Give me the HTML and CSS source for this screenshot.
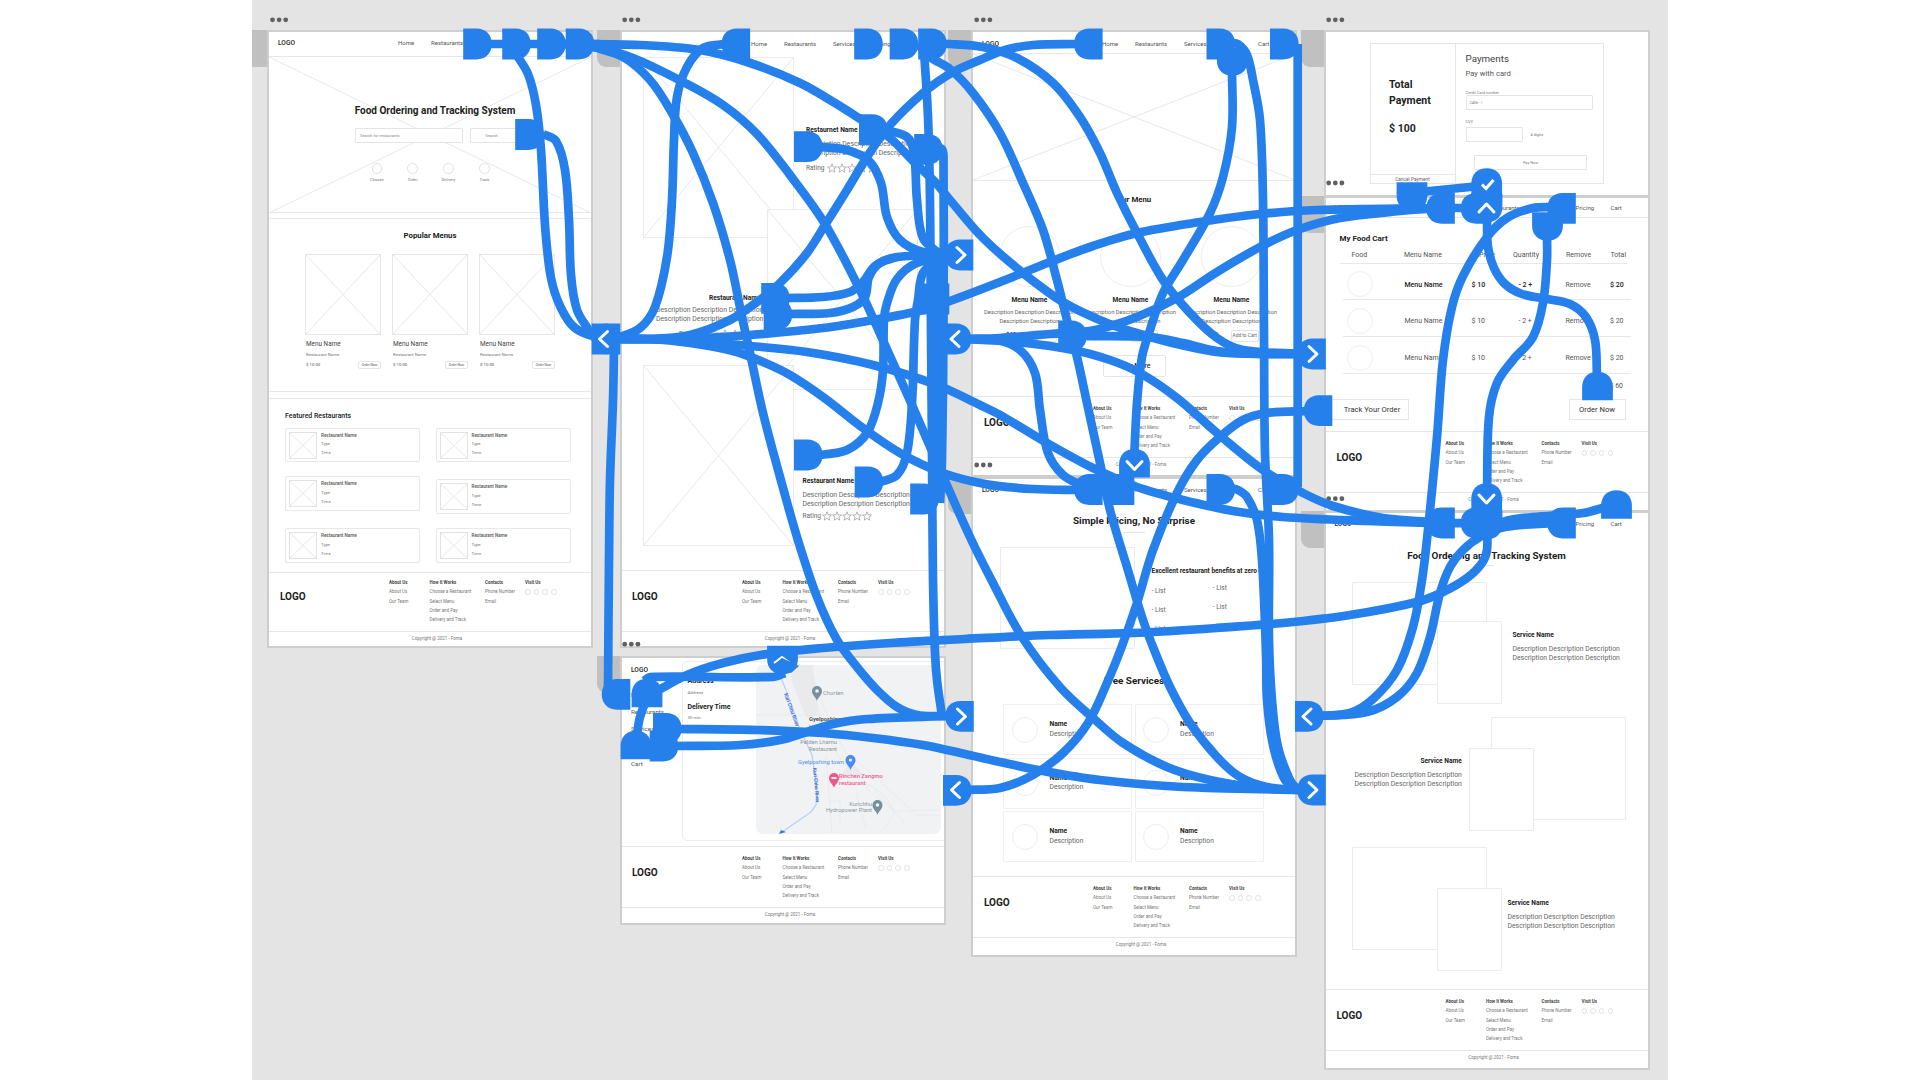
FILE: index.html
```html
<!DOCTYPE html>
<html lang="en">
<head>
<meta charset="utf-8">
<title>Food Ordering and Tracking System – Prototype</title>
<link rel="stylesheet" href="styles.css">
</head>
<body>
<svg class="defs" aria-hidden="true">
  <symbol id="cross" viewBox="0 0 100 100" preserveAspectRatio="none"><path class="cross-line" d="M0 0L100 100M100 0L0 100"/></symbol>
  <symbol id="stars" viewBox="0 0 50 10"><g class="star"><path id="star" d="M5 .8L6.2 3.9L9.4 4L6.9 6L7.8 9.2L5 7.4L2.2 9.2L3.1 6L.6 4L3.8 3.9Z"/><use href="#star" x="10"/><use href="#star" x="20"/><use href="#star" x="30"/><use href="#star" x="40"/></g></symbol>
</svg>
<main class="canvas">

  <i class="tab b-home"></i><i class="tab b-rest"></i><i class="tab b-track"></i><i class="tab b-menu"></i>
  <i class="tab b-price"></i><i class="tab b-pay"></i><i class="tab b-cart"></i><i class="tab b-serv"></i>

  <!-- Home -->
  <article class="board b-home">
    <nav class="nav ruled"><b>LOGO</b><span>Home</span><span>Restaurants</span><span>Services</span><span>Pricing</span><span>Cart</span></nav>
    <section class="hero">
      <svg class="x"><use href="#cross"/></svg>
      <h1>Food Ordering and Tracking System</h1>
      <div class="search"><span class="field">Search for restaurants</span><span class="button">Search</span></div>
      <div class="steps"><span>Choose</span><span>Order</span><span>Delivery</span><span>Track</span></div>
    </section>
    <section class="popular">
      <h2>Popular Menus</h2>
      <div class="menus">
        <div class="menu"><svg class="pic dark"><use href="#cross"/></svg><h3>Menu Name</h3><p>Restaurant Name</p><div class="buy"><span>$ 10.00</span><span class="pill">Order Now</span></div></div>
        <div class="menu"><svg class="pic"><use href="#cross"/></svg><h3>Menu Name</h3><p>Restaurant Name</p><div class="buy"><span>$ 10.00</span><span class="pill">Order Now</span></div></div>
        <div class="menu"><svg class="pic"><use href="#cross"/></svg><h3>Menu Name</h3><p>Restaurant Name</p><div class="buy"><span>$ 10.00</span><span class="pill">Order Now</span></div></div>
      </div>
    </section>
    <section class="featured">
      <h2>Featured Restaurants</h2>
      <div class="pair">
        <div class="stack left">
          <div class="rest"><svg><use href="#cross"/></svg><div><b>Restaurant Name</b><span>Type</span><span>Time</span></div></div>
          <div class="rest"><svg><use href="#cross"/></svg><div><b>Restaurant Name</b><span>Type</span><span>Time</span></div></div>
          <div class="rest"><svg><use href="#cross"/></svg><div><b>Restaurant Name</b><span>Type</span><span>Time</span></div></div>
        </div>
        <div class="stack right">
          <div class="rest"><svg><use href="#cross"/></svg><div><b>Restaurant Name</b><span>Type</span><span>Time</span></div></div>
          <div class="rest"><svg><use href="#cross"/></svg><div><b>Restaurant Name</b><span>Type</span><span>Time</span></div></div>
          <div class="rest"><svg><use href="#cross"/></svg><div><b>Restaurant Name</b><span>Type</span><span>Time</span></div></div>
        </div>
      </div>
    </section>
    <footer class="foot tight"><div class="cols"><strong>LOGO</strong><ul><li>About Us</li><li>About Us</li><li>Our Team</li></ul><ul><li>How It Works</li><li>Choose a Restaurant</li><li>Select Menu</li><li>Order and Pay</li><li>Delivery and Track</li></ul><ul><li>Contacts</li><li>Phone Number</li><li>Email</li></ul><ul><li>Visit Us</li><li class="social"><i></i><i></i><i></i><i></i></li></ul></div><p>Copyright @ 2021 - Foma</p></footer>
  </article>

  <!-- Restaurants -->
  <article class="board b-rest">
    <nav class="nav"><b>LOGO</b><span>Home</span><span>Restaurants</span><span>Services</span><span>Pricing</span><span>Cart</span></nav>
    <section class="stage">
      <svg class="photo p1"><use href="#cross"/></svg>
      <svg class="photo p2"><use href="#cross"/></svg>
      <svg class="photo p3"><use href="#cross"/></svg>
      <div class="blurb r1"><h3>Restaurnet Name</h3><p>Description Description Description</p><p>Description Description Description</p><div class="rating">Rating <svg><use href="#stars"/></svg></div></div>
      <div class="blurb r2"><h3>Restaurant Name</h3><p>Description Description Description</p><p>Description Description Description</p><div class="rating">Rating <svg><use href="#stars"/></svg></div></div>
      <div class="blurb r3"><h3>Restaurant Name</h3><p>Description Description Description</p><p>Description Description Description</p><div class="rating">Rating <svg><use href="#stars"/></svg></div></div>
    </section>
    <footer class="foot"><div class="cols"><strong>LOGO</strong><ul><li>About Us</li><li>About Us</li><li>Our Team</li></ul><ul><li>How It Works</li><li>Choose a Restaurant</li><li>Select Menu</li><li>Order and Pay</li><li>Delivery and Track</li></ul><ul><li>Contacts</li><li>Phone Number</li><li>Email</li></ul><ul><li>Visit Us</li><li class="social"><i></i><i></i><i></i><i></i></li></ul></div><p>Copyright @ 2021 - Foma</p></footer>
  </article>

  <!-- Tracking -->
  <article class="board b-track">
    <section class="tracking">
      <nav class="side"><b>LOGO</b><span>Home</span><span>Restaurants</span><span>Services</span><span>Pricing</span><span>Cart</span></nav>
      <div class="panel">
        <div class="info"><h3>Address</h3><p>Address</p><h3>Delivery Time</h3><p>30 min</p></div>
        <svg class="map" viewBox="0 0 185 169">
          <path fill="#e9eaec" d="M37 0H57L62 50L50 53L35 15ZM84 112L95 96L107 109Z"/>
          <g fill="none" stroke="#e6e8ea" stroke-width=".8"><path d="M53 0L61 38L68 68L85 95L100 112L118 130L140 146L184 145M70 90L76 168M72 136H84V160M0 50H60M100 128L110 164M118 124L150 160M105 112C112 125 128 120 138 148L128 165M57 12L75 60L90 88L120 112L160 150H184"/></g>
          <path fill="none" stroke="#b9d1f8" stroke-width="1.3" d="M25 13L30 25L44 64L56 90L61 125L60 140L55 147L26 167"/>
          <path fill="#3f78d1" d="M23 169L25 165L30 167Z"/>
          <g font-size="5.8" fill="#8b979e">
            <text x="67" y="29.5">Chorten</text>
            <text x="53" y="56" fill="#555" font-weight="700">Gyelposhing</text>
            <text x="53" y="64" fill="#555">Hotel</text>
            <text x="81" y="79" text-anchor="end">Pelden Lhamu</text><text x="81" y="85.5" text-anchor="end">Restaurant</text>
            <text x="42" y="99" fill="#4a8cf5">Gyelposhing town</text>
            <g fill="#f0588c" font-weight="500"><text x="83" y="113">Rinchen Zangmo</text><text x="83" y="119.5">restaurant</text></g>
            <text x="116" y="141" text-anchor="end">Kurichhu</text><text x="116" y="147" text-anchor="end">Hydropower Plant</text>
          </g>
          <g fill="#3570cc" font-size="5" font-weight="700"><text transform="translate(28 29) rotate(70)">Kuri Chhu River</text><text transform="translate(57 103) rotate(85)">Kuri Chhu River</text></g>
          <g><g fill="#78909c"><path id="mk" d="M61 36C60 32 56 30.500 56 26A5 5 0 0 1 66 26C66 30.500 62 32 61 36Z"/><use href="#mk" x="60.500" y="114"/></g><use href="#mk" x="33.500" y="69" fill="#4a8cf5"/><use href="#mk" x="17" y="87" fill="#f0588c"/></g>
          <g fill="#f1f2f4"><circle cx="61" cy="26" r="1.800"/><circle cx="94.500" cy="95" r="1.600"/><path d="M75.500 112H80.500V114H75.500Z"/><circle cx="121.500" cy="140" r="1.800"/></g>
        </svg>
      </div>
    </section>
    <footer class="foot"><div class="cols"><strong>LOGO</strong><ul><li>About Us</li><li>About Us</li><li>Our Team</li></ul><ul><li>How It Works</li><li>Choose a Restaurant</li><li>Select Menu</li><li>Order and Pay</li><li>Delivery and Track</li></ul><ul><li>Contacts</li><li>Phone Number</li><li>Email</li></ul><ul><li>Visit Us</li><li class="social"><i></i><i></i><i></i><i></i></li></ul></div><p>Copyright @ 2021 - Foma</p></footer>
  </article>

  <!-- Menu -->
  <article class="board b-menu">
    <nav class="nav"><b>LOGO</b><span>Home</span><span>Restaurants</span><span>Services</span><span>Pricing</span><span>Cart</span></nav>
    <svg class="banner"><use href="#cross"/></svg>
    <section class="dishes">
      <h2>Our Menu</h2>
      <div class="plates">
        <div class="plate"><i></i><h3>Menu Name</h3><p>Description Description Description</p><p>Description Description</p><div class="add"><b>$ 10</b><span class="pill">Add to Cart</span></div></div>
        <div class="plate"><i></i><h3>Menu Name</h3><p>Description Description Description</p><p>Description Description</p><div class="add"><b>$ 10</b><span class="pill">Add to Cart</span></div></div>
        <div class="plate"><i></i><h3>Menu Name</h3><p>Description Description Description</p><p>Description Description</p><div class="add"><b>$ 10</b><span class="pill">Add to Cart</span></div></div>
      </div>
      <span class="more">View More</span>
    </section>
    <footer class="foot"><div class="cols"><strong>LOGO</strong><ul><li>About Us</li><li>About Us</li><li>Our Team</li></ul><ul><li>How It Works</li><li>Choose a Restaurant</li><li>Select Menu</li><li>Order and Pay</li><li>Delivery and Track</li></ul><ul><li>Contacts</li><li>Phone Number</li><li>Email</li></ul><ul><li>Visit Us</li><li class="social"><i></i><i></i><i></i><i></i></li></ul></div><p>Copyright @ 2021 - Foma</p></footer>
  </article>

  <!-- Pricing -->
  <article class="board b-price">
    <nav class="nav"><b>LOGO</b><span>Home</span><span>Restaurants</span><span>Services</span><span>Pricing</span><span>Cart</span></nav>
    <h1 class="headline">Simple Pricing, No Surprise</h1>
    <section class="offer">
      <div class="frame"></div>
      <div class="benefits">
        <h3>Excellent restaurant benefits at zero cost</h3>
        <div class="lists"><ul><li>- List</li><li>- List</li><li>- List</li></ul><ul><li>- List</li><li>- List</li><li>- List</li></ul></div>
      </div>
    </section>
    <h1 class="free">Free Services</h1>
    <section class="cards">
      <div class="card"><i></i><div><b>Name</b><span>Description</span></div></div><div class="card"><i></i><div><b>Name</b><span>Description</span></div></div>
      <div class="card"><i></i><div><b>Name</b><span>Description</span></div></div><div class="card"><i></i><div><b>Name</b><span>Description</span></div></div>
      <div class="card"><i></i><div><b>Name</b><span>Description</span></div></div><div class="card"><i></i><div><b>Name</b><span>Description</span></div></div>
    </section>
    <footer class="foot"><div class="cols"><strong>LOGO</strong><ul><li>About Us</li><li>About Us</li><li>Our Team</li></ul><ul><li>How It Works</li><li>Choose a Restaurant</li><li>Select Menu</li><li>Order and Pay</li><li>Delivery and Track</li></ul><ul><li>Contacts</li><li>Phone Number</li><li>Email</li></ul><ul><li>Visit Us</li><li class="social"><i></i><i></i><i></i><i></i></li></ul></div><p>Copyright @ 2021 - Foma</p></footer>
  </article>

  <!-- Payment -->
  <article class="board b-pay">
    <section class="checkout">
      <div class="total"><div class="sum"><h1>Total<br>Payment</h1><h1>$ 100</h1></div><p>Cancel Payment</p></div>
      <div class="form">
        <h2>Payments</h2><h3>Pay with card</h3>
        <label>Credit Card number</label><span class="input">2456 - |</span>
        <label class="cvv">CVV</label><div class="row"><span class="input"></span><span>4 digits</span></div>
        <span class="pay">Pay Now</span>
      </div>
    </section>
  </article>

  <!-- Cart -->
  <article class="board b-cart">
    <nav class="nav ruled"><b>LOGO</b><span>Home</span><span>Restaurants</span><span>Services</span><span>Pricing</span><span>Cart</span></nav>
    <section class="cart">
      <h2>My Food Cart</h2>
      <div class="line head"><span>Food</span><span>Menu Name</span><span>Price</span><span>Quantity</span><span>Remove</span><span>Total</span></div>
      <div class="line first"><i></i><span>Menu Name</span><span>$ 10</span><span>- 2 +</span><span>Remove</span><span>$ 20</span></div>
      <div class="line"><i></i><span>Menu Name</span><span>$ 10</span><span>- 2 +</span><span>Remove</span><span>$ 20</span></div>
      <div class="line"><i></i><span>Menu Name</span><span>$ 10</span><span>- 2 +</span><span>Remove</span><span>$ 20</span></div>
      <p class="grand">$ 60</p>
      <div class="actions"><span class="track">Track Your Order</span><span>Order Now</span></div>
    </section>
    <footer class="foot"><div class="cols"><strong>LOGO</strong><ul><li>About Us</li><li>About Us</li><li>Our Team</li></ul><ul><li>How It Works</li><li>Choose a Restaurant</li><li>Select Menu</li><li>Order and Pay</li><li>Delivery and Track</li></ul><ul><li>Contacts</li><li>Phone Number</li><li>Email</li></ul><ul><li>Visit Us</li><li class="social"><i></i><i></i><i></i><i></i></li></ul></div><p>Copyright @ 2021 - Foma</p></footer>
  </article>

  <!-- Services -->
  <article class="board b-serv">
    <nav class="nav"><b>LOGO</b><span>Home</span><span>Restaurants</span><span>Services</span><span>Pricing</span><span>Cart</span></nav>
    <h1 class="headline">Food Ordering and Tracking System</h1>
    <section class="stage">
      <div class="big g1"></div><div class="small s1"></div>
      <div class="blurb d1"><h3>Service Name</h3><p>Description Description Description</p><p>Description Description Description</p></div>
      <div class="big g2"></div><div class="small s2"></div>
      <div class="blurb d2"><h3>Service Name</h3><p>Description Description Description</p><p>Description Description Description</p></div>
      <div class="big g3"></div><div class="small s3"></div>
      <div class="blurb d3"><h3>Service Name</h3><p>Description Description Description</p><p>Description Description Description</p></div>
    </section>
    <footer class="foot"><div class="cols"><strong>LOGO</strong><ul><li>About Us</li><li>About Us</li><li>Our Team</li></ul><ul><li>How It Works</li><li>Choose a Restaurant</li><li>Select Menu</li><li>Order and Pay</li><li>Delivery and Track</li></ul><ul><li>Contacts</li><li>Phone Number</li><li>Email</li></ul><ul><li>Visit Us</li><li class="social"><i></i><i></i><i></i><i></i></li></ul></div><p>Copyright @ 2021 - Foma</p></footer>
  </article>

  <svg class="wires" viewBox="252 0 1416 1080" width="1416" height="1080">
    <defs>
      <g id="dots" fill="#606060"><circle r="2.400"/><circle cx="6.600" r="2.400"/><circle cx="13.200" r="2.400"/></g>
      <path id="pin" d="M-14.300 -15.400H-1C8.500 -15.400 14.300 -9 14.300 0S8.500 15.400 -1 15.400H-14.300Z"/>
      <path id="chev" d="M-4 -7.500L4 0L-4 7.500" fill="none" stroke="#fff" stroke-width="3" stroke-linecap="round" stroke-linejoin="round"/>
    </defs>
    <use href="#dots" x="272.500" y="19.800"/><use href="#dots" x="624.700" y="19.800"/><use href="#dots" x="976.700" y="19.800"/><use href="#dots" x="1328.700" y="19.800"/>
    <use href="#dots" x="624.700" y="644.200"/><use href="#dots" x="976.700" y="465"/><use href="#dots" x="1328.700" y="183"/><use href="#dots" x="1328.700" y="498.700"/>
    <g id="paths" fill="none" stroke="#2680eb" stroke-width="8.700" stroke-linecap="butt" stroke-linejoin="round"></g>
    <g id="pins" fill="#2680eb"></g>
  </svg>
</main>
<script src="connectors.js"></script>
</body>
</html>
```
FILE: styles.css
```css
* { box-sizing: border-box; margin: 0; padding: 0; }
body { background: #fff; font-family: Roboto, "Liberation Sans", sans-serif; color: #333; overflow: hidden; }
.defs { position: absolute; width: 0; height: 0; }
.canvas { position: relative; width: 1416px; height: 1080px; margin-left: 252px; background: #e4e4e4; overflow: hidden; }
.wires { position: absolute; inset: 0; }
h1, h2, h3, b, strong { color: #222; font-weight: 700; }
h1, h2, h3, p, span, li, b { white-space: nowrap; }
ul { list-style: none; }
i { display: block; }
svg { display: block; }
.cross-line { fill: none; stroke: #e8e8e8; stroke-width: 1; vector-effect: non-scaling-stroke; }
.dark .cross-line { stroke: #c4c4c4; }
.star path, .star { fill: none; stroke: #888; stroke-width: .6; }

/* boards are placed on the free canvas */
.board { position: absolute; left: var(--x); top: var(--y); width: 322px; height: var(--h); background: #fff; display: flex; flex-direction: column; box-shadow: 0 0 0 2px #cecece; overflow: hidden; }
.tab { position: absolute; left: calc(var(--x) - 25px); top: calc(var(--y) - 2px); width: 23px; height: 37px; background: #c0c0c0; border-bottom-left-radius: 9px; }
.b-home { --x: 17px; --y: 32px; --h: 614px; }
.b-rest { --x: 370px; --y: 32px; --h: 614px; }
.b-track { --x: 370px; --y: 658px; --h: 265px; }
.b-menu { --x: 721px; --y: 32px; --h: 443px; }
.b-price { --x: 721px; --y: 479px; --h: 476px; }
.b-pay { --x: 1073.500px; --y: 32px; --h: 163px; }
.b-cart { --x: 1073.500px; --y: 198px; --h: 312px; }
.b-serv { --x: 1073.500px; --y: 513px; --h: 555px; }

.nav { flex: none; height: 25px; padding: 0 0 2px 9px; display: grid; grid-template-columns: 120px 33px 49px 39px 35px auto; align-items: center; font-size: 6px; line-height: 8px; color: #555; }
.nav b { font-size: 6.600px; font-weight: 500; }
.ruled { border-bottom: 1px solid #e8e8e8; }

.foot { flex: none; margin-top: auto; height: 79px; border-top: 1px solid #e6e6e6; font-size: 4.500px; line-height: 9.300px; color: #777; }
.foot .cols { height: 60px; padding: 7px 0 0 11px; display: grid; grid-template-columns: 109px 40.500px 55.500px 40px auto; }
.foot strong { font-size: 10px; line-height: 38px; }
.foot li:first-child { font-weight: 700; color: #444; }
.foot > p { border-top: 1px solid #e6e6e6; line-height: 13px; text-align: center; padding-left: 14px; }
.social { display: flex; gap: 3.200px; padding-top: 2px; }
.social i { width: 5.500px; height: 5.500px; border: 1px solid #e2e2e2; border-radius: 50%; }
.tight { height: 74px; }
.tight .cols { height: 58px; padding-top: 5px; }
.b-rest .foot strong, .b-track .foot strong { margin-left: -1px; }

/* home */
.hero { display: grid; height: 156px; grid-template-rows: 71px 38px 1fr; border-bottom: 1px solid #e8e8e8; }
.hero .x { grid-area: 1 / 1 / 4 / 2; width: 322px; height: 156px; }
.hero h1 { grid-area: 1 / 1; font-size: 10px; line-height: 16px; padding: 45.500px 0 0 10px; text-align: center; }
.search { grid-area: 2 / 1; display: flex; gap: 6.500px; padding-left: 86px; font-size: 4px; line-height: 13px; color: #888; }
.search > * { height: 15px; border: 1px solid #e4e4e4; border-radius: 1px; background: #fff; }
.field { width: 108px; padding-left: 4px; }
.button { width: 54px; padding-left: 15px; }
.steps { grid-area: 3 / 1; display: flex; padding-left: 90px; margin-top: -3px; font-size: 4px; line-height: 6px; text-align: center; color: #777; }
.steps span { width: 35.800px; }
.steps span::before { content: ""; display: block; width: 8.500px; height: 8.500px; margin: 0 auto 3px; border: 1px solid #e0e0e0; border-radius: 50%; background: #fff; }
.popular { margin-top: 5px; height: 174px; border: solid #e8e8e8; border-width: 1px 0; }
.popular h2 { font-size: 7.800px; line-height: 10px; margin: 12px 0 0; text-align: center; }
.menus { display: flex; gap: 11px; padding: 13px 0 0 36px; }
.menu { width: 76px; font-size: 4.300px; color: #777; }
.pic { width: 76px; height: 81px; border: 1px solid #e6e6e6; }
.menu h3 { font-size: 6.400px; font-weight: 400; color: #444; line-height: 9px; margin: 5px 0 0 1px; }
.menu p { line-height: 7px; margin: 2px 0 0 1px; }
.buy { display: flex; justify-content: space-between; align-items: center; margin: 2.500px 0 0 1px; line-height: 7px; color: #555; }
.pill { border: 1px solid #e4e4e4; border-radius: 2px; background: #fff; }
.buy .pill { width: 23px; font-size: 3.300px; text-align: center; line-height: 6.500px; }
.featured { margin-top: 6px; border-top: 1px solid #e8e8e8; padding: 11.500px 0 0 16px; }
.featured h2 { font-size: 6.900px; font-weight: 500; line-height: 10px; }
.pair { display: flex; gap: 15.500px; margin-top: 7px; }
.rest { width: 135px; height: 34.500px; border: 1px solid #e8e8e8; border-radius: 2px; display: flex; gap: 4px; padding: 3px; font-size: 4.300px; line-height: 8.800px; color: #777; }
.rest b { font-weight: 500; color: #555; font-size: 4.600px; }
.rest svg { width: 28px; height: 27px; border: 1px solid #e2e2e2; }
.rest div { display: grid; align-content: center; }
.stack { display: grid; }
.left { grid-template-rows: 48.500px 52px 35px; }
.right { grid-template-rows: 51.500px 49px 35px; }

/* overlapping wireframe pieces share one grid cell */
.stage { display: grid; grid-template: 1fr / 1fr; justify-items: start; align-items: start; flex: 1; min-height: 0; }
.stage > * { grid-area: 1 / 1; }
.photo { width: 151px; height: 181px; border: 1px solid #ebebeb; background: #fff; }
.p1 { margin: 0 0 0 21px; }
.p2 { margin: 152px 0 0 145px; }
.p3 { margin: 308px 0 0 21px; }
.blurb { font-size: 6.850px; line-height: 9.200px; color: #666; }
.blurb h3 { font-size: 6.600px; line-height: 10px; margin-bottom: 5px; }
.rating { display: flex; align-items: center; margin-top: 5px; gap: 2px; font-size: 6.500px; }
.rating svg { width: 50px; height: 10px; }
.r1 { margin: 68px 0 0 184px; }
.r2 { margin: 236px 0 0 34px; }
.r2 h3 { padding-left: 53px; margin-bottom: 3px; }
.r2 .rating { padding-left: 23px; }
.r3 { margin: 419px 0 0 180.500px; }
.r3 .rating { margin-top: 2px; gap: 1px; }
.b-rest .foot { height: 76px; }

/* tracking */
.tracking { flex: 1; display: flex; gap: 19.500px; padding: 3px 0 5px 9px; }
.side { width: 31px; display: grid; grid-auto-rows: 17.200px; align-items: center; padding-top: 1px; align-content: start; font-size: 6.200px; color: #555; line-height: 8px; }
.side b { font-weight: 500; font-size: 6.600px; margin-top: -1px; }
.side span { margin-top: 14px; }
.panel { flex: none; width: 270px; height: 180px; border: 1px solid #ececec; border-radius: 6px; display: flex; padding: 3px 0 0 5px; }
.info { width: 68.500px; font-size: 4.300px; line-height: 8px; color: #777; padding-top: 12px; }
.info h3 { font-size: 7px; line-height: 9px; margin-bottom: 2.500px; }
.info p { margin-bottom: 6px; }
.map { width: 185px; height: 169px; background: #f1f2f4; border-radius: 7px; }

/* menu */
.b-menu .nav { height: 21px; padding: 2px 0 0 9px; }
.banner { flex: none; width: 322px; height: 128px; border: solid #e8e8e8; border-width: 1px 0; }
.dishes { text-align: center; }
.dishes h2 { font-size: 7.800px; line-height: 10px; margin-top: 14px; }
.plates { display: grid; grid-template-columns: 102px 100px 102px; justify-content: start; padding-left: 5.500px; margin-top: 20.500px; font-size: 5.800px; line-height: 8.800px; color: #666; }
.plate { display: flex; flex-direction: column; align-items: center; }
.plate > i { width: 61px; height: 61px; border: 1px solid #eee; border-radius: 50%; }
.plate h3 { font-size: 6.600px; line-height: 10px; margin: 8px 0 3.500px; }
.add { display: flex; gap: 13px; margin-top: 4px; font-size: 4.800px; padding-left: 4px; line-height: 10px; }
.add .pill { width: 28px; height: 12px; }
.more { display: block; width: 63px; height: 22px; margin: 13px auto 0; border: 1px solid #e4e4e4; border-radius: 2px; font-size: 7px; font-weight: 500; line-height: 20px; }

/* pricing */
.headline { font-size: 9.900px; line-height: 14px; text-align: center; margin-top: 10px; }
.headline::after { content: ""; display: block; width: 21px; height: 1px; margin: 4px auto 0; background: #e2e2e2; }
.b-price .nav, .b-serv .nav { padding-bottom: 3px; }
.offer { display: flex; gap: 17px; padding: 14px 0 0 26.500px; }
.frame { width: 135px; height: 102px; border: 1px solid #ebebeb; border-radius: 1px; }
.benefits { padding-top: 18.500px; font-size: 6.600px; color: #666; }
.benefits h3 { font-size: 6.500px; line-height: 10px; }
.lists { display: flex; gap: 47px; height: 55px; line-height: 19px; padding-top: 6.500px; }
.lists ul + ul { margin-top: -3px; }
.free { font-size: 9.900px; line-height: 14px; text-align: center; margin: 25px 0 16px; }
.cards { display: grid; grid-template-columns: 129px 129px; gap: 2.500px 3px; padding-left: 29.500px; }
.card { height: 51px; border: 1.500px solid #f0f0f0; display: flex; align-items: center; gap: 12px; padding-left: 8px; font-size: 6.700px; line-height: 9.500px; color: #666; }
.card:nth-child(even) { padding-left: 7px; gap: 11.500px; }
.card i { width: 26px; height: 26px; border: 1.500px solid #eee; border-radius: 50%; }
.card b, .card span { display: block; }

/* payment */
.checkout { display: grid; grid-template-columns: 85px 149px; margin: 11px 0 0 44px; width: 234px; height: 141px; border: 1px solid #e6e6e6; }
.total { border-right: 1px solid #e6e6e6; }
.sum { height: 130px; padding: 33px 0 0 18.500px; }
.sum h1 { font-size: 10.500px; line-height: 16.300px; margin-bottom: 11.500px; }
.total p { border-top: 1px solid #e6e6e6; font-size: 4.800px; line-height: 10px; text-align: center; color: #666; }
.form { padding: 8px 0 0 10px; display: flex; flex-direction: column; font-size: 3.900px; color: #777; }
.form h2 { font-size: 9.800px; line-height: 13px; font-weight: 400; color: #444; }
.form h3 { font-size: 7.600px; line-height: 10px; margin-top: 4px; font-weight: 400; color: #555; }
.form label { line-height: 5px; margin-top: 10.500px; }
.form .cvv { margin-top: 9px; }
.input { height: 15px; width: 127px; border: 1px solid #e4e4e4; border-radius: 1px; padding-left: 3px; line-height: 14px; }
.row { display: flex; gap: 8px; margin-top: 3px; align-items: center; }
.row .input { width: 57px; }
.pay { width: 113px; height: 15px; margin: 13px 0 0 8.500px; border: 1px solid #e4e4e4; border-radius: 1px; text-align: center; line-height: 14px; }

/* cart */
.b-cart .nav { height: 20px; padding-bottom: 0; }
.cart { padding-left: 14px; }
.cart h2 { font-size: 8px; line-height: 10px; margin-top: 15.500px; }
.line { width: 288px; margin-left: 3px; height: 36.800px; padding-top: 6.500px; display: grid; grid-template-columns: 62px 67px 47px 47px 44.500px auto; align-items: center; border-bottom: 1px solid #e8e8e8; font-size: 7px; color: #555; }
.line i { width: 26px; height: 26px; border: 1px solid #f0f0f0; border-radius: 50%; margin: -1px 0 0 4px; }
.head { height: 20px; margin-left: 0; padding: 4px 0 0 12px; grid-template-columns: 52.500px 75px 34px 53px 44.500px auto; }
.first { color: #222; font-weight: 500; }
.first span:nth-child(5) { color: #555; font-weight: 400; }
.grand { font-size: 7px; line-height: 10px; padding: 7px 0 0 270px; color: #555; }
.actions { display: flex; justify-content: space-between; width: 300px; margin: 8px 0 0 -14px; font-size: 7.600px; line-height: 19px; color: #333; }
.actions span { width: 57px; height: 21px; border: 1px solid #e6e6e6; text-align: center; }
.actions .track { width: 83px; padding-left: 10px; }

/* services */
.b-serv .headline { margin-top: 11px; }
.b-serv .headline::after { width: 14px; margin-top: 2px; }
.big, .small { border: 1px solid #ebebeb; background: #fff; border-radius: 1px; }
.big { width: 135px; height: 103px; }
.small { width: 65px; height: 83px; }
.g1 { margin: 15.500px 0 0 26.500px; }
.s1 { margin: 54.500px 0 0 111.500px; }
.d1 { margin: 63.500px 0 0 187px; }
.g2 { margin: 151px 0 0 165.500px; }
.s2 { margin: 181.500px 0 0 143.500px; }
.d2 { margin: 189.500px 0 0 29px; }
.d2 h3 { padding-left: 66px; }
.g3 { margin: 281px 0 0 26.500px; }
.s3 { margin: 322px 0 0 111.500px; }
.d3 { margin: 332px 0 0 182px; }
```
FILE: connectors.js
```js
// Each wire is a list of x,y stops; a smooth curve is run through them.
const wires = [
  "490,44 600,44",
  "516,54 528,74 536,105 541,150 545,225 551,278 561,308 575,328 600,339",
  "543,134 556,141 565,170 569,220 571,275 577,310 590,332",
  "614,348 613,400 610,480 609,560 608,690",
  "565,44 640,45 700,50 750,63 800,83 835,103 865,122 890,138 915,163 935,182 950,200 983,238 1023,273 1063,302 1107,323 1150,337 1190,347 1227,353 1305,354",
  "565,44 594,47 633,58 685,83 723,105 757,134 790,175 825,224 860,290 885,345 912,405 938,465 970,537 993,583 1022,637 1060,687 1093,718 1123,743 1167,767 1210,780 1260,788 1300,790",
  "590,46 623,57 650,80 672,113 693,153 713,203 730,260 742,317 750,353 763,413 780,477 797,537 817,597 837,640 857,667 877,690 897,707 917,715 945,716",
  "930,44 950,44 983,47 1017,58 1053,83 1080,117 1100,153 1117,193 1137,233 1163,280 1190,313 1217,338 1243,350 1305,354",
  "918,44 930,57 950,69 973,93 1000,133 1023,183 1043,230 1057,280 1067,320 1077,357 1087,403 1100,463 1110,510 1127,567 1143,620 1155,652 1170,687 1190,723 1217,757 1240,777 1267,787 1300,790",
  "725,44 703,48 687,67 677,97 674,140 672,200 667,257 655,307 640,328 615,339",
  "610,339 650,339 690,335 730,320 757,302 780,283 807,253 825,225 847,190 867,157 890,125 923,93 953,72 980,60 1005,50 1033,45 1078,44",
  "610,339 680,339 750,335 823,328 873,320 923,310 950,301 1000,282 1050,262 1093,246 1137,233 1200,222 1260,214 1317,210 1440,208",
  "610,339 650,339 690,341 750,346 807,352 873,365 937,385 980,405 1000,415 1047,443 1093,468 1137,487 1183,500 1233,511 1283,517 1367,521 1433,523 1500,523",
  "610,339 650,339 690,343 733,351 763,362 790,375 823,397 863,428 900,453 940,472 985,484 1033,489 1080,490",
  "965,339 997,340 1020,350 1035,373 1040,410 1048,453 1063,475 1085,487",
  "965,339 1000,338 1050,334 1095,330 1137,317 1177,298 1217,272 1260,247 1297,230 1340,218 1400,211 1440,208",
  "965,339 1017,342 1073,350 1110,360 1140,373 1177,398 1217,433 1263,470 1303,493 1333,506 1383,518 1433,522",
  "1080,336 1150,337 1183,343 1217,351 1260,354 1305,354",
  "1232,70 1232,127 1223,177 1210,213 1183,260 1163,293 1150,330 1142,357 1137,403 1134,460",
  "1230,43 1238,44 1247,55 1253,80 1260,120 1263,200 1264,333 1265,453 1269,540 1269,640 1272,700 1278,747 1290,780 1298,790",
  "1230,488 1238,490 1247,497 1257,520 1262,560 1266,653 1267,700 1273,745 1285,780 1298,790",
  "1297.7,44 1297.7,487",
  "965,790 1000,788 1033,775 1063,753 1088,723 1107,683 1122,646 1137,603 1153,550 1177,493 1197,460 1220,437 1243,420 1267,413 1310,411",
  "655,692 687,675 723,663 767,654 823,648 890,643 965,639 1050,635 1133,633 1217,628 1283,623 1350,615 1417,602 1443,592 1467,578 1482,563 1487,550 1487,525",
  "1318,716 1350,713 1373,699 1397,670 1413,627 1422,580 1428,530 1437,437 1443,360 1452,307 1463,276 1487,237 1507,218 1533,208 1555,207",
  "1318,716 1367,712 1397,697 1417,673 1430,637 1440,593 1450,567 1463,550 1480,537 1505,527 1555,523",
  "1487,220 1488,247 1494,268 1505,284 1522,294 1547,299 1570,304 1586,317 1595,340 1597,375",
  "1547,235 1547,260 1543,303 1533,337 1513,360 1497,383 1489,417 1487,490",
  "1420,192 1480,186", "1430,208 1490,208",
  "1490,526 1510,520 1533,517 1583,513 1606,507",
  "820,147 847,150 869,161 881,183 887,217 900,240 923,252 960,255",
  "885,130 907,137 914,153 917,200 923,238 940,254",
  "785,298 823,297 850,292 863,282 875,266 897,257 960,255",
  "788,314 830,313 853,307 865,297 869,277 880,263 897,257",
  "820,455 847,450 867,433 878,403 883,370 884,320 887,303 897,279 917,263 955,256",
  "880,482 897,475 907,453 912,403 915,320 918,300 923,273 940,257",
  "924,50 928,117 930,200 931,333 932,453 933,580 935,653 937,680 942,716",
  "936,148 942,149 943.500,160 943.500,320 942,460 940,503",
  "938,260 938,460 936,495",
  "675,729 757,730 823,733 873,738 923,745 965,754 1000,762 1043,771 1100,780 1183,787 1300,790",
  "670,746 740,745 780,740 807,732 833,724 867,719 950,716",
  "637,735 640,717 650,690",
  "644,681 650,677 773,677 785,673"
];
const curve = text => {
  const p = text.split(" ").map(s => s.split(",").map(Number));
  let d = "M" + p[0];
  for (let i = 0; i < p.length - 1; i++) {
    const a = p[i - 1] || p[i], b = p[i], c = p[i + 1], e = p[i + 2] || c;
    const k = Math.hypot(c[0] - b[0], c[1] - b[1]);
    const t1 = Math.hypot(c[0] - a[0], c[1] - a[1]) || 1, t2 = Math.hypot(e[0] - b[0], e[1] - b[1]) || 1;
    d += "C" + [b[0] + (c[0] - a[0]) / t1 * k / 3, b[1] + (c[1] - a[1]) / t1 * k / 3,
      c[0] - (e[0] - b[0]) / t2 * k / 3, c[1] - (e[1] - b[1]) / t2 * k / 3, c[0], c[1]].map(n => n.toFixed(1)).join(" ");
  }
  return d;
};
document.getElementById("paths").innerHTML = wires.map(w => `<path d="${curve(w)}"/>`).join("");

// Pins: centre x, centre y, rotation (0 = round side to the right).
const pins = [
  [477.5,44,0],[516.5,44,0],[551.5,44,0],[580,44,0],[529.5,134.5,0],[606,339,0],[606,339,180],
  [868.5,44,0],[904,44,0],[932.5,44,0],[873.3,129.7,0],[808.3,146.7,0],[928.5,149.3,0],[775.5,298.3,0],[778,314.5,0],
  [808.3,455,0],[869,482,0],[924.5,499,0],[935,299,0],[935,299,180],[735.8,44,180],[1088.3,44,180],
  [1220.8,44,0],[1284.3,44,0],[1072.5,336,0],[1232.3,61.5,90],
  [1088.3,489.5,180],[1120,489.5,0],[1120,489.5,180],[1220.8,489.5,0],[1284.3,489.5,0],[1278,489.5,0],
  [959,255,180],[957,339,0],[959.5,716.3,180],[957.3,790.3,0],[1309.3,716.3,0],[1311.5,790,180],[1311.5,354,180],[1318,410.6,180],
  [1486.7,182.500,270],[1440.5,208.3,180],[1475,208.3,180],[1487,208,90],[1412,196.5,90],[1561.5,208.3,180],[1547.5,226.5,90],
  [1597.5,386,270],[1486.7,497.5,270],[1440.5,523,180],[1475,523,180],[1487,525,90],[1561.5,523,180],[1616.5,504.5,270],
  [1134.5,463.3,270],[782.5,660,90],[616,694.3,180],[647,693,270],[667.3,728.5,0],[636,745,270],[664,746,0]
];
const marks = [
  [603.500,339,180],[961,255,0],[955,339,180],[961.500,716.500,0],[955.500,790,180],[1307,716.500,180],[1313,790,0],[1313,354,0],
  [1486.500,208,270],[1486.500,499,90],[1134.500,465.500,90]
];
document.getElementById("pins").innerHTML =
  pins.map(([x, y, r]) => `<use href="#pin" transform="translate(${x} ${y}) rotate(${r})"/>`).join("") +
  marks.map(([x, y, r]) => `<use href="#chev" transform="translate(${x} ${y}) rotate(${r})"/>`).join("") +
  '<path d="M1482 184.500L1486 188.500L1493.500 180" fill="none" stroke="#fff" stroke-width="3"/>' +
  '<path d="M774 663L782 657L790 663" fill="none" stroke="#fff" stroke-width="2"/><path d="M774 666L782 658L799 666L791 673Z"/>';
```
